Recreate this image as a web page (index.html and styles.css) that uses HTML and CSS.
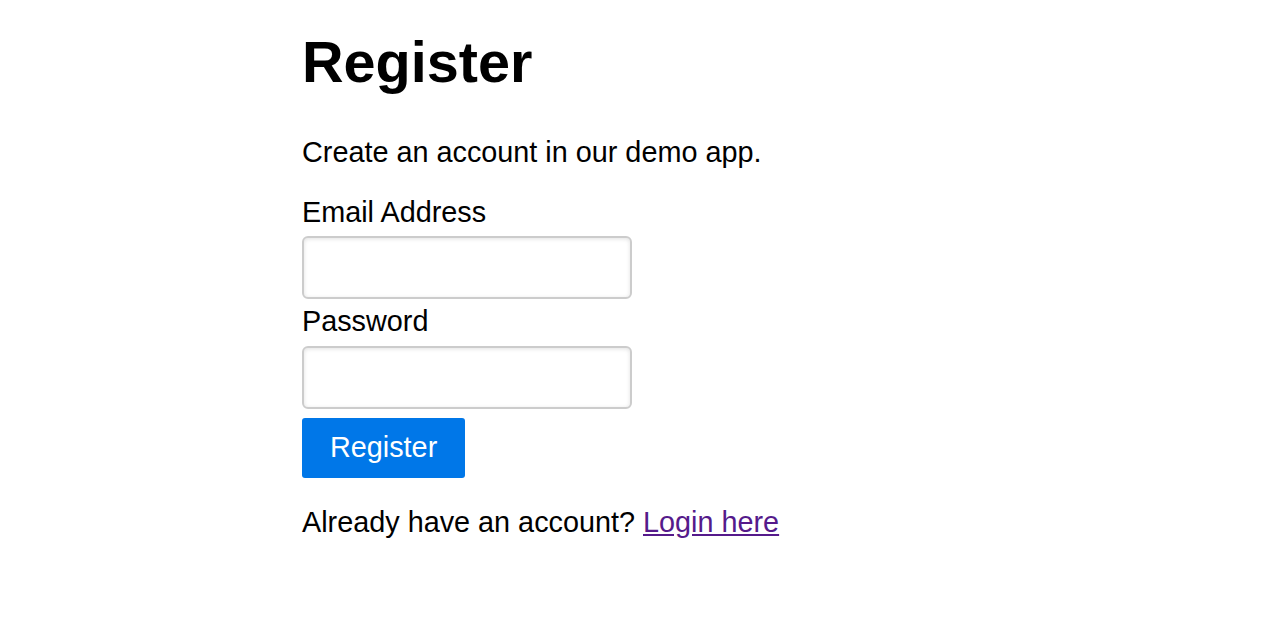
FILE: index.html
```html
<!DOCTYPE html>
<html lang="en">
<head>
<meta charset="utf-8">
<title>Register</title>
<link rel="stylesheet" href="styles.css">
</head>
<body>
<main class="page">
  <h1 class="title">Register</h1>
  <p class="intro">Create an account in our demo app.</p>
  <form class="form">
    <label class="label" for="email">Email Address</label>
    <input class="field" id="email" type="email">
    <label class="label" for="password">Password</label>
    <input class="field" id="password" type="password">
    <button class="btn" type="button">Register</button>
  </form>
  <p class="footer">Already have an account? <a class="link" href="#">Login here</a></p>
</main>
</body>
</html>
```

FILE: styles.css
```css
html, body {
  margin: 0;
  padding: 0;
  background: #ffffff;
}

body {
  font-family: "Liberation Sans", Arial, Helvetica, sans-serif;
  font-size: 28.8px;
  line-height: 1.2;
  color: #000;
}

.page {
  width: 666px;
  margin: 0 auto;
  padding-top: 28px;
}

.title {
  font-size: 57.6px;
  font-weight: 700;
  line-height: 1.2;
  margin: 0;
}

.intro {
  margin: 38px 0 0;
}

.form {
  display: flex;
  flex-direction: column;
  align-items: flex-start;
  margin-top: 25px;
}

.label {
  display: block;
  margin-bottom: 7px;
}

.field {
  box-sizing: border-box;
  width: 330px;
  height: 63px;
  border: 2px solid #cccccc;
  border-radius: 6px;
  box-shadow: inset 0 1px 4px rgba(0, 0, 0, 0.12);
  background: #fff;
  font: inherit;
  padding: 0 10px;
  margin: 0 0 5px;
}

.btn {
  margin-top: 4px;
  height: 60px;
  padding: 0 28px;
  border: none;
  border-radius: 3px;
  background: #0077e8;
  color: #fff;
  font: inherit;
  line-height: 1;
  cursor: pointer;
}

.footer {
  margin: 27px 0 0;
}

.link {
  color: #551a8b;
  text-decoration: underline;
}
```
